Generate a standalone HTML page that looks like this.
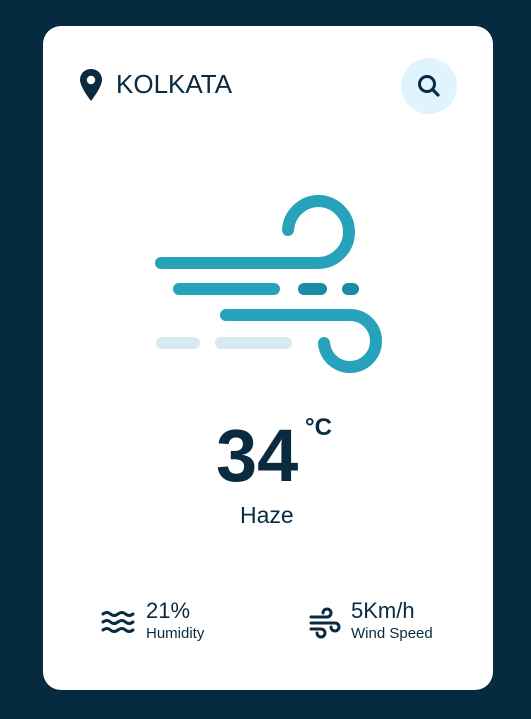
<!DOCTYPE html>
<html><head><meta charset="utf-8"><style>
*{margin:0;padding:0;box-sizing:border-box}
body{width:531px;height:719px;background:#062a3f;position:relative;font-family:"Liberation Sans",Arial,sans-serif;color:#0a2a40;overflow:hidden}
.card{position:absolute;left:43px;top:26px;width:450px;height:664px;background:#fff;border-radius:18px}
.t{position:absolute;white-space:nowrap}
</style></head><body>
<div class="card"></div>
<svg class="t" style="left:78px;top:68px" width="26" height="34" viewBox="0 0 26 34">
<path d="M13 1C6.5 1 2 5.8 2 12c0 7 11 21 11 21s11-14 11-21C24 5.8 19.5 1 13 1z" fill="#0a2a40"/>
<circle cx="13" cy="12" r="4.2" fill="#fff"/></svg>
<div class="t" style="left:116px;top:69px;font-size:26px;line-height:30px">KOLKATA</div>
<div class="t" style="left:401px;top:58px;width:56px;height:56px;border-radius:50%;background:#dff4fc"></div>
<svg class="t" style="left:415px;top:72px" width="28" height="28" viewBox="0 0 28 28">
<circle cx="12" cy="12" r="7.5" fill="none" stroke="#0a2a40" stroke-width="3"/>
<path d="M17.5 17.5L23 23" stroke="#0a2a40" stroke-width="3.2" stroke-linecap="round"/></svg>
<svg class="t" style="left:0;top:0" width="531" height="400" viewBox="0 0 531 400">
<g fill="none" stroke-linecap="round" stroke-width="12">
<path d="M161 263H318A31 31 0 0 0 318 201A31 31 0 0 0 288 230" stroke="#26a3ba"/>
<path d="M179 289H274" stroke="#26a3ba"/>
<path d="M304 289H321" stroke="#1b8ca5"/>
<path d="M348 289H353" stroke="#1b8ca5"/>
<path d="M226 315H350A26 26 0 0 1 350 367A26 26 0 0 1 324 343" stroke="#26a3ba"/>
<path d="M162 343H194" stroke="#d8eaf1"/>
<path d="M221 343H286" stroke="#d8eaf1"/>
</g></svg>
<div class="t" style="left:216px;top:414px;font-size:74px;font-weight:bold;line-height:84px">34</div>
<div class="t" style="left:305px;top:414px;font-size:24px;font-weight:bold;line-height:28px">°C</div>
<div class="t" style="left:240px;top:501px;font-size:23px;line-height:28px">Haze</div>
<svg class="t" style="left:101px;top:610px" width="34" height="26" viewBox="0 0 34 26">
<g fill="none" stroke="#0a2a40" stroke-width="3" stroke-linecap="round">
<path d="M2 4q4-3 7.5 0t7.5 0 7.5 0 7.5 0"/><path d="M2 12q4-3 7.5 0t7.5 0 7.5 0 7.5 0"/><path d="M2 20q4-3 7.5 0t7.5 0 7.5 0 7.5 0"/></g></svg>
<div class="t" style="left:146px;top:598px;font-size:22px;line-height:26px">21%</div>
<div class="t" style="left:146px;top:625px;font-size:15px;line-height:18px">Humidity</div>
<svg class="t" style="left:309px;top:606px" width="34" height="34" viewBox="0 0 34 34">
<g fill="none" stroke="#0a2a40" stroke-width="3" stroke-linecap="round">
<path d="M2 11H18A4 4 0 1 0 14 7"/><path d="M2 17H26A4 4 0 1 1 22 21"/><path d="M2 23H12A4 4 0 1 1 8 27"/></g></svg>
<div class="t" style="left:351px;top:598px;font-size:22px;line-height:26px">5Km/h</div>
<div class="t" style="left:351px;top:625px;font-size:15px;line-height:18px">Wind Speed</div>
</body></html>
